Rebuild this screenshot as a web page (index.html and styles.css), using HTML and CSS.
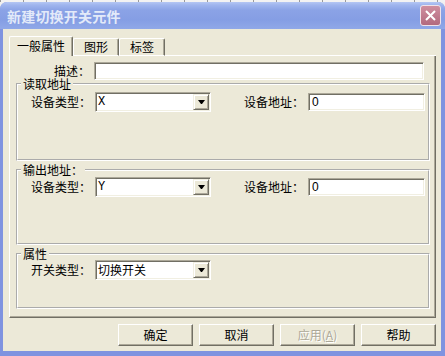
FILE: index.html
```html
<!DOCTYPE html>
<html lang="zh-CN">
<head>
	<meta charset="UTF-8">
	<title>新建切换开关元件</title>
	<link rel="stylesheet" href="styles.css">
</head>
<body>
	<div class="desk"></div>
	<div class="window">
		<div class="titlebar">
			<span class="title">新建切换开关元件</span>
			<span class="close">
				<svg width="11" height="11" viewBox="0 0 11 11"><path d="M1 1 10 10M10 1 1 10" stroke="#fff" stroke-width="2"/></svg>
			</span>
		</div>

		<div class="client">
			<div class="tabs">
				<div class="tab active">一般属性</div>
				<div class="tab">图形</div>
				<div class="tab">标签</div>
				<div class="tab-fill"></div>
			</div>

			<div class="panel">
				<div class="row desc">
					<label class="lbl">描述：</label>
					<div class="edit"></div>
				</div>

				<fieldset class="group g1">
					<legend>读取地址</legend>
					<div class="row">
						<label class="lbl">设备类型：</label>
						<div class="combo"><span class="val mono">X</span><span class="drop"></span></div>
						<label class="lbl2">设备地址：</label>
						<div class="edit">0</div>
					</div>
				</fieldset>

				<fieldset class="group g2">
					<legend>输出地址：</legend>
					<div class="row">
						<label class="lbl">设备类型：</label>
						<div class="combo"><span class="val mono">Y</span><span class="drop"></span></div>
						<label class="lbl2">设备地址：</label>
						<div class="edit">0</div>
					</div>
				</fieldset>

				<fieldset class="group g3">
					<legend>属性</legend>
					<div class="row">
						<label class="lbl">开关类型：</label>
						<div class="combo"><span class="val">切换开关</span><span class="drop"></span></div>
					</div>
				</fieldset>
			</div>

			<div class="buttons">
				<button class="btn">确定</button>
				<button class="btn">取消</button>
				<button class="btn off">应用(<u>A</u>)</button>
				<button class="btn">帮助</button>
			</div>
		</div>
	</div>
</body>
</html>
```

FILE: styles.css
```css
*,
*::before,
*::after {
	padding: 0;
	margin: 0;
	box-sizing: border-box;
}
body {
	width: 445px;
	height: 356px;
	overflow: hidden;
	background: #f0f0f0;
	font: 12px/14px "Noto Sans CJK SC", sans-serif;
	color: #000;
}

/* strip of the window behind */
.desk {
	height: 2px;
	background: repeating-linear-gradient(to right, #9a9a9a 0 1px, #f2f2f2 1px 23px);
}

.window {
	height: 354px;
	display: flex;
	flex-direction: column;
	background: #7f93e0;
	border-radius: 7px 7px 0 0;
}

.titlebar {
	height: 27px;
	flex: none;
	display: flex;
	align-items: center;
	justify-content: space-between;
	padding: 0 4px 0 7px;
	border-radius: 7px 7px 0 0;
	background: linear-gradient(#b4c6f3 0, #9fb5ee 3px, #8ba3e6 8px, #859ee4 18px, #90a8e8 27px);
}
.title {
	font-size: 14px;
	font-weight: 700;
	letter-spacing: 0.2px;
	color: #e3eaf9;
}
.close {
	width: 21px;
	height: 21px;
	display: flex;
	align-items: center;
	justify-content: center;
	border: 1px solid #efe2e8;
	border-radius: 3px;
	background: linear-gradient(#cf8e9f, #b36a7e);
}

.client {
	flex: 1;
	margin: 0 4px 5px 3px;
	padding: 7px 5px 0 6px;
	background: #ece9d8;
}

/* tabs */
.tabs {
	height: 20px;
	display: flex;
	align-items: flex-end;
}
.tab {
	height: 18px;
	padding: 0 10px;
	line-height: 16px;
	border: 1px solid;
	border-color: #fff #716f64 #fff #fff;
	border-radius: 2px 2px 0 0;
	box-shadow: inset -1px 0 #aca899;
}
.tab.active {
	height: 20px;
	padding: 0 7px;
	line-height: 18px;
	border-bottom: 0;
}
.tab-fill {
	flex: 1;
	align-self: stretch;
	border-bottom: 1px solid #fff;
}

.panel {
	height: 262px;
	padding: 6px 0 0 6px;
	border: 1px solid;
	border-top: 0;
	border-color: #fff #716f64 #716f64 #fff;
	box-shadow: inset -1px -1px #aca899;
}

/* rows of fields */
.row {
	display: flex;
	align-items: center;
}
.lbl,
.lbl2 {
	flex: none;
	margin-right: 4px;
	line-height: 12px;
	text-align: right;
}
.lbl {
	width: 73px;
}
.desc .lbl {
	width: 74px;
}
.lbl2 {
	width: 93px;
}

.edit {
	width: 117px;
	height: 18px;
	padding: 0 3px;
	font-family: "Liberation Sans", sans-serif;
	line-height: 16px;
	background: #fff;
	border: 1px solid;
	border-color: #aca899 #fff #fff #aca899;
	box-shadow: inset 1px 1px #716f64, inset -1px -1px #f1efe2;
}
.desc .edit {
	width: 330px;
}

.combo {
	width: 116px;
	height: 20px;
	display: flex;
	padding: 1px;
	background: #fff;
	border: 1px solid;
	border-color: #aca899 #fff #fff #aca899;
	box-shadow: inset 1px 1px #716f64, inset -1px -1px #f1efe2;
}
.val {
	flex: 1;
	padding-left: 1px;
	line-height: 16px;
}
.mono {
	font-family: "Liberation Mono", monospace;
}
.drop {
	width: 16px;
	height: 16px;
	display: flex;
	align-items: center;
	justify-content: center;
	background: #ece9d8;
	border: 1px solid;
	border-color: #f1efe2 #716f64 #716f64 #f1efe2;
	box-shadow: inset 1px 1px #fff, inset -1px -1px #aca899;
}
.drop::after {
	content: "";
	box-sizing: content-box;
	width: 1px;
	border-top: 4px solid #000;
	border-left: 3px solid transparent;
	border-right: 3px solid transparent;
}

/* group boxes */
.group {
	width: 414px;
	min-width: 0;
	border: 2px groove #fff;
}
.group legend {
	margin-left: 3px;
	padding: 0 2px;
	line-height: 12px;
}
.g1 {
	height: 83px;
	margin-top: -2px;
}
.g1 .row {
	margin-top: 2px;
}
.g2 {
	height: 81px;
	margin-top: 3px;
}
.g2 .row {
	margin-top: 1px;
}
.g3 {
	height: 61px;
	margin-top: 3px;
}

/* dialog buttons */
.buttons {
	display: flex;
	justify-content: flex-end;
	gap: 6px;
	margin-top: 6px;
}
.btn {
	width: 75px;
	height: 22px;
	font: inherit;
	line-height: 20px;
	background: #ece9d8;
	border: 1px solid;
	border-color: #fff #716f64 #716f64 #fff;
	box-shadow: inset -1px -1px #aca899;
}
.btn.off {
	color: #aca899;
	text-shadow: 1px 1px #fff;
}
```
